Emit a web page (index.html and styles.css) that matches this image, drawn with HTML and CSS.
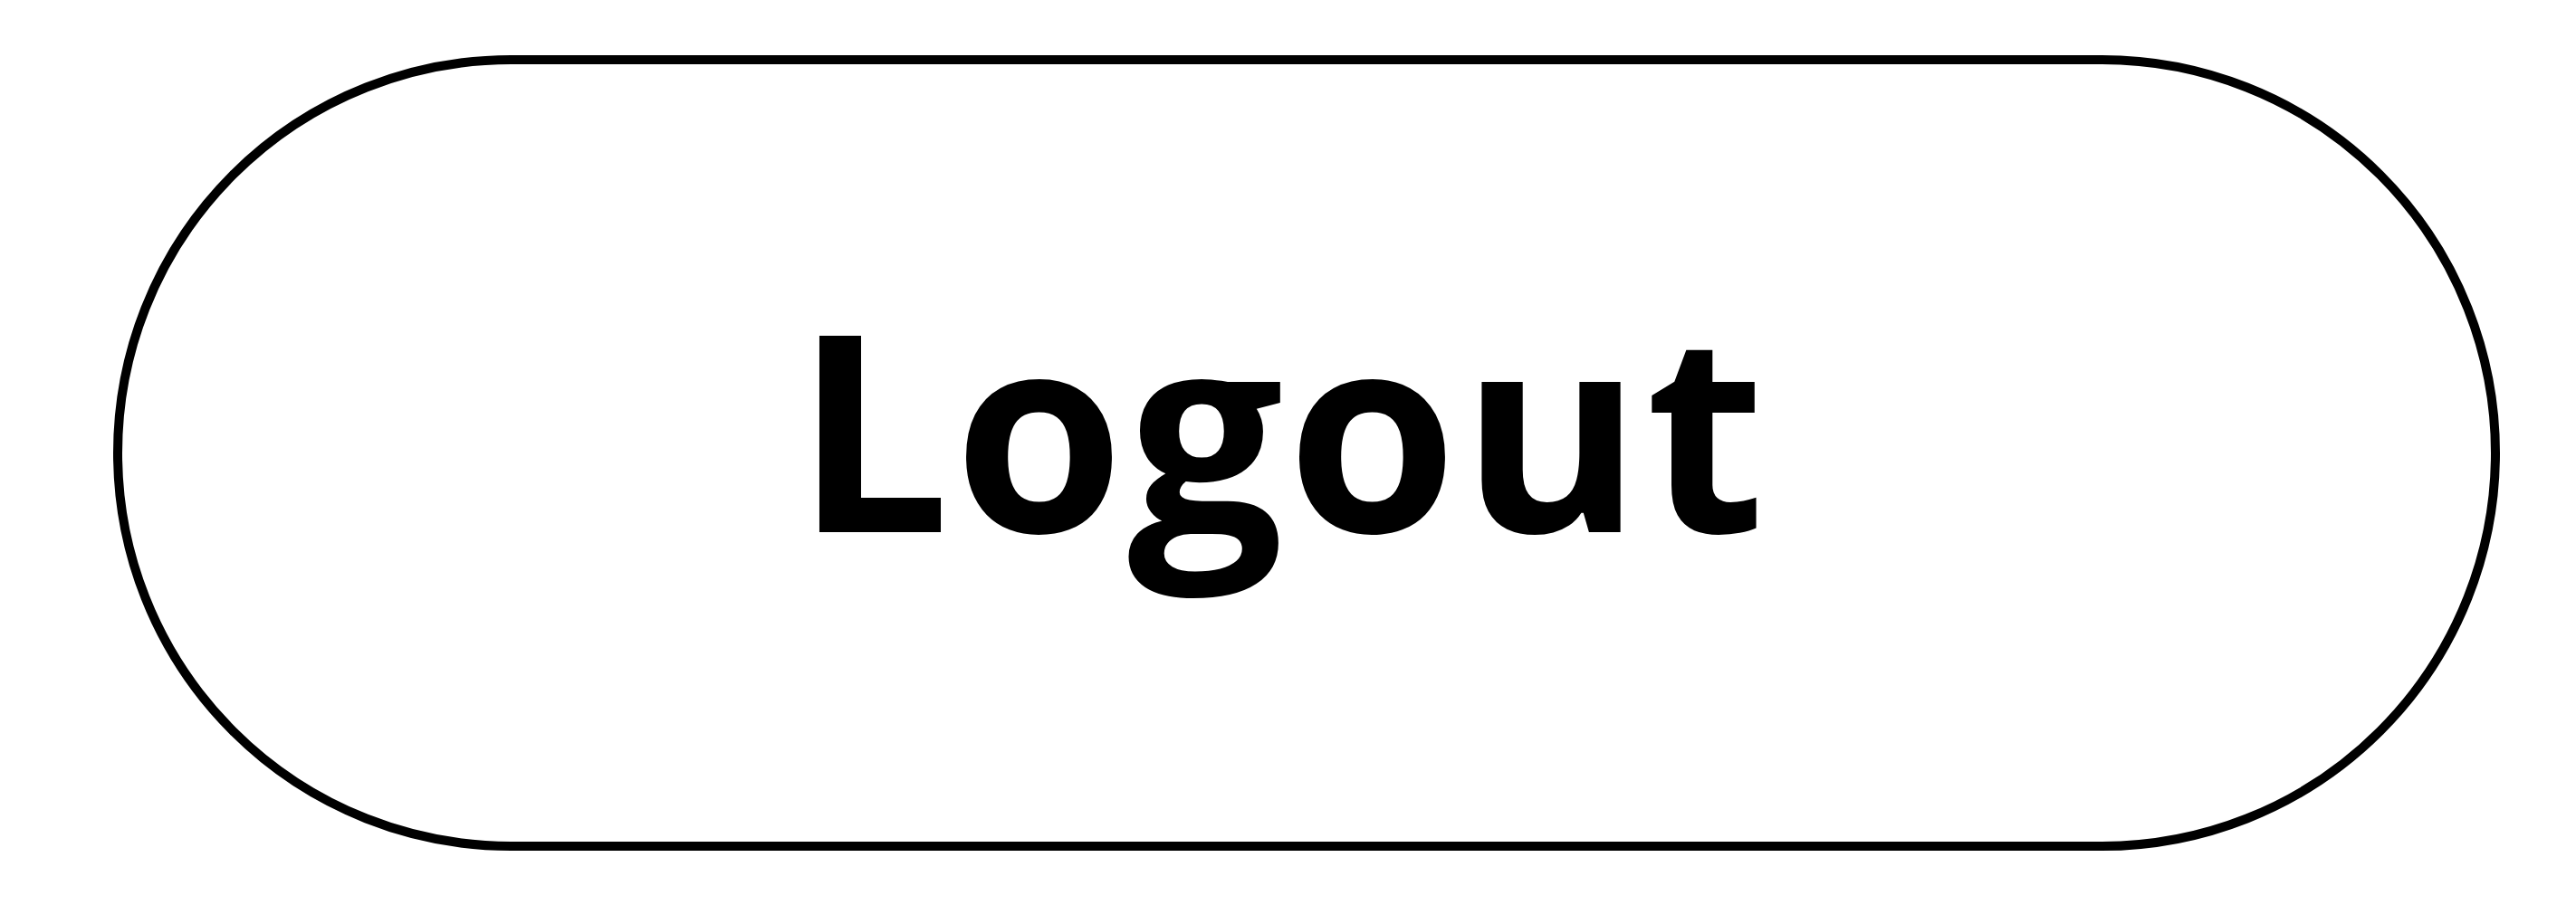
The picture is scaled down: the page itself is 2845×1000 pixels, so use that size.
FILE: index.html
```html
<!DOCTYPE html>
<html lang="en">
<head>
<meta charset="utf-8">
<title>Logout</title>
<link rel="stylesheet" href="styles.css">
</head>
<body>
<div class="page">
  <button class="logout-btn" type="button"><span class="label">Logout</span></button>
</div>
</body>
</html>
```
FILE: styles.css
```css
html, body {
  margin: 0;
  padding: 0;
  background: #ffffff;
}
.page {
  width: 2845px;
  height: 1000px;
  padding: 61px 0 0 125px;
  box-sizing: border-box;
}
.logout-btn {
  display: flex;
  justify-content: center;
  align-items: flex-start;
  box-sizing: border-box;
  width: 2636px;
  height: 879px;
  margin: 0;
  padding: 192px 55px 0 0;
  border: 10px solid #000000;
  border-radius: 440px;
  background: #ffffff;
  color: #000000;
  font-family: "Open Sans", "Noto Sans", sans-serif;
  font-weight: 700;
  font-size: 304px;
  letter-spacing: 4px;
  line-height: normal;
  cursor: pointer;
}
.label {
  display: block;
}
```
